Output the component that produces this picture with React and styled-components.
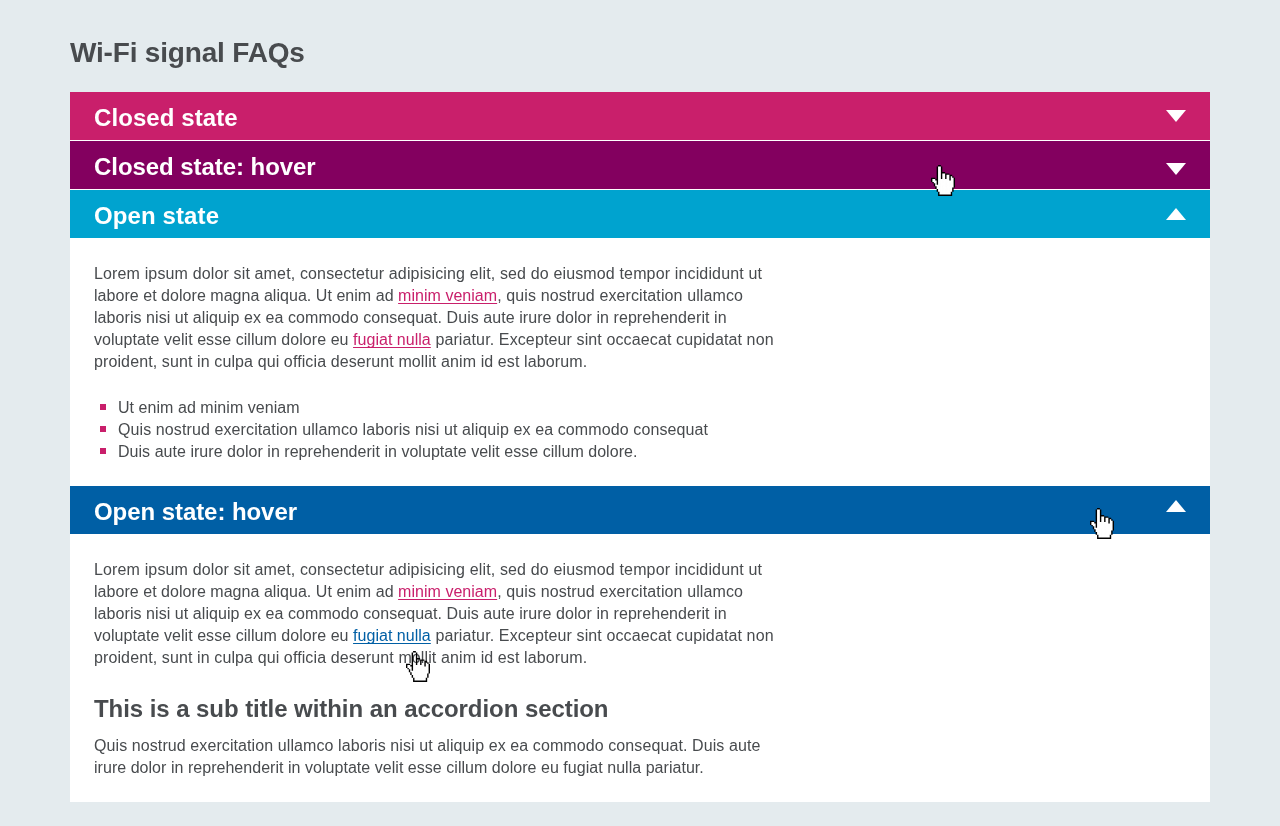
import React from "react";
import styled, { createGlobalStyle } from "styled-components";

const Global = createGlobalStyle`
  body { margin: 0; background: #e4ebee; }
`;
const Page = styled.main`
  position: relative;
  box-sizing: border-box;
  width: 1280px;
  height: 826px;
  padding: 34px 70px 24px;
  background: #e4ebee;
  color: #484b4e;
  font-family: "Liberation Sans", Arial, sans-serif;
  font-size: 16px;
  line-height: 22px;
`;
const Title = styled.h1`
  margin: 0;
  height: 58px;
  font-size: 28px;
  line-height: 37px;
  font-weight: 700;
`;
const Accordion = styled.div`
  background: #fff;
`;
const Header = styled.button`
  display: flex;
  justify-content: space-between;
  align-items: flex-start;
  box-sizing: border-box;
  width: 100%;
  height: 48px;
  margin: 0 0 ${p => p.$gap || 0}px;
  padding: 0 24px;
  border: 0;
  background: ${p => p.$bg};
  color: #fff;
  font: 700 24px/51px "Liberation Sans", Arial, sans-serif;
  text-align: left;
`;
const Arrow = styled.svg`
  display: block;
  width: 20px;
  height: 12px;
  margin-top: ${p => p.$top}px;
  fill: #fff;
`;
const Panel = styled.div`
  padding: 25px 24px 23px;
`;
const Paragraph = styled.p`
  margin: 0;
`;
const Line = styled.span`
  display: block;
  width: max-content;
  white-space: nowrap;
  letter-spacing: ${p => p.$track || 0}px;
`;
const Run = styled.span`
  letter-spacing: ${p => p.$track}px;
`;
const Link = styled.a`
  color: ${p => (p.$hover ? "#005fa5" : "#c91f6b")};
  letter-spacing: 0.03px;
  text-decoration: underline;
  text-decoration-color: ${p => (p.$hover ? "#005fa5" : "#c91f6b")};
  text-decoration-thickness: 1px;
  text-decoration-skip-ink: none;
  text-underline-offset: 2px;
`;
const List = styled.ul`
  list-style: none;
  margin: 24px 0 0;
  padding: 0;
`;
const Item = styled.li`
  display: flex;
  align-items: flex-start;
  gap: 12px;
  padding-left: 6px;
  &::before {
    content: "";
    width: 6px;
    height: 6px;
    margin-top: 7px;
    background: #c91f6b;
  }
`;
const SubTitle = styled.h2`
  margin: 0;
  height: 66px;
  font-size: 24px;
  line-height: 80px;
  font-weight: 700;
`;
const Pointer = styled.svg`
  position: absolute;
  left: ${p => p.$x}px;
  top: ${p => p.$y}px;
  width: 24px;
  height: 31px;
  pointer-events: none;
  mix-blend-mode: ${p => (p.$multiply ? "multiply" : "normal")};
`;

const HAND = [
  ".....XX..........",
  "....X  X.........",
  "....X  X.........",
  "....X  X.........",
  "....X  X.........",
  "....X  XXX.......",
  "....X  X  XXX....",
  "....X  X  X  XX..",
  "....X  X  X  X X.",
  "XXX.X  X  X  X  X",
  "X  XX        X  X",
  "X   X           X",
  ".X  X           X",
  "..X X           X",
  "..X             X",
  "...X            X",
  "...X           X.",
  "....X          X.",
  "....X          X.",
  ".....X        X..",
  ".....X        X..",
  ".....XXXXXXXXXX..",
];
const trace = test =>
  HAND.map((row, y) => [...row].map((c, x) => (test(c) ? `M${x} ${y}h1v1h-1z` : "")).join("")).join("");

const Hand = ({ x, y, multiply }) => (
  <Pointer $x={x} $y={y} $multiply={multiply} viewBox="0 0 17 22" preserveAspectRatio="none" aria-hidden="true">
    <path d={trace(c => c !== ".")} fill="#000" />
    <path d={trace(c => c === " ")} fill="#fff" />
  </Pointer>
);
const Chevron = ({ top, up }) => (
  <Arrow $top={top} viewBox="0 0 20 12" aria-hidden="true">
    <path d={up ? "M0 12L10 0L20 12Z" : "M0 0H20L10 12Z"} />
  </Arrow>
);
const Lorem = ({ hovered }) => (
  <Paragraph>
    <Line $track={0.145}>Lorem ipsum dolor sit amet, consectetur adipisicing elit, sed do eiusmod tempor incididunt ut</Line>
    <Line>
      <Run $track={0.04}>labore et dolore magna aliqua. Ut enim ad </Run>
      <Link>minim veniam</Link>
      <Run $track={0.115}>, quis nostrud exercitation ullamco</Run>
    </Line>
    <Line $track={0.062}>laboris nisi ut aliquip ex ea commodo consequat. Duis aute irure dolor in reprehenderit in</Line>
    <Line>
      <Run $track={0.053}>voluptate velit esse cillum dolore eu </Run>
      <Link $hover={hovered}>fugiat nulla</Link>
      <Run $track={0.12}> pariatur. Excepteur sint occaecat cupidatat non</Run>
    </Line>
    <Line $track={0.11}>proident, sunt in culpa qui officia deserunt mollit anim id est laborum.</Line>
  </Paragraph>
);

export default function App() {
  return (
    <Page>
      <Global />
      <Title><Line $track={-0.18}>Wi-Fi signal FAQs</Line></Title>
      <Accordion>
        <Header $bg="#c91f6b" $gap={1}><Line $track={0.08}>Closed state</Line><Chevron top={18} /></Header>
        <Header $bg="#83005f" $gap={1}><Line $track={-0.06}>Closed state: hover</Line><Chevron top={22} /></Header>
        <Header $bg="#00a3cf"><Line $track={0.11}>Open state</Line><Chevron top={18} up /></Header>
        <Panel>
          <Lorem />
          <List>
            <Item><Line $track={0.05}>Ut enim ad minim veniam</Line></Item>
            <Item><Line $track={0.104}>Quis nostrud exercitation ullamco laboris nisi ut aliquip ex ea commodo consequat</Line></Item>
            <Item><Line $track={0.035}>Duis aute irure dolor in reprehenderit in voluptate velit esse cillum dolore.</Line></Item>
          </List>
        </Panel>
        <Header $bg="#005fa5"><Line $track={-0.065}>Open state: hover</Line><Chevron top={14} up /></Header>
        <Panel>
          <Lorem hovered />
          <SubTitle><Line $track={-0.063}>This is a sub title within an accordion section</Line></SubTitle>
          <Paragraph>
            <Line $track={0.09}>Quis nostrud exercitation ullamco laboris nisi ut aliquip ex ea commodo consequat. Duis aute</Line>
            <Line $track={0.035}>irure dolor in reprehenderit in voluptate velit esse cillum dolore eu fugiat nulla pariatur.</Line>
          </Paragraph>
        </Panel>
      </Accordion>
      <Hand x={931} y={165} />
      <Hand x={1090} y={508} />
      <Hand x={406} y={651} multiply />
    </Page>
  );
}
